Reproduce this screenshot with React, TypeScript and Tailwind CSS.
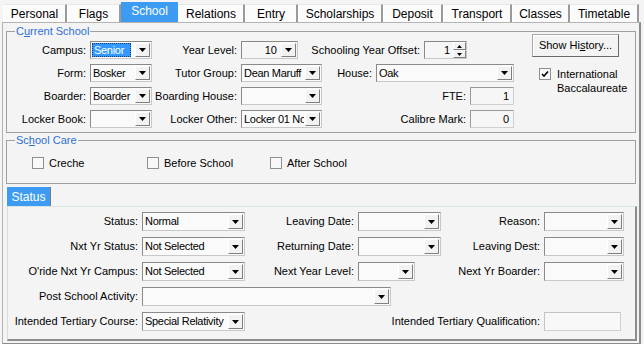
import type { ReactNode } from 'react';

const tabs = [
  { name: 'Personal', w: 'w-[64px]' },
  { name: 'Flags', w: 'w-[54px]' },
  { name: 'School', w: 'w-[57px]', active: true },
  { name: 'Relations', w: 'w-[67px]' },
  { name: 'Entry', w: 'w-[53px]' },
  { name: 'Scholarships', w: 'w-[85px]' },
  { name: 'Deposit', w: 'w-[60px]' },
  { name: 'Transport', w: 'w-[69px]' },
  { name: 'Classes', w: 'w-[58px]' },
  { name: 'Timetable', w: 'w-[69px]' },
];

function Arrow() {
  return (
    <svg width="7" height="4" viewBox="0 0 7 4">
      <polygon points="0,0 7,0 3.5,4" fill="#000" />
    </svg>
  );
}

function Label({ className = '', children }: { className?: string; children: ReactNode }) {
  return <div className={`shrink-0 whitespace-nowrap pr-[4px] text-right ${className}`}>{children}</div>;
}

function Combo({
  className = '',
  value,
  focus = false,
  tall = false,
}: {
  className?: string;
  value?: string;
  focus?: boolean;
  tall?: boolean;
}) {
  return (
    <div
      className={`flex shrink-0 border border-[#8a8a8a] border-r-[#c8c8c8] border-b-[#c8c8c8] bg-[#fafafa] ${
        tall ? 'h-[19px]' : 'h-[18px]'
      } ${className}`}
    >
      <div className="flex min-w-0 flex-1 items-center overflow-hidden whitespace-nowrap pl-[1px] tracking-[-0.3px]">
        {focus ? (
          <span className="border border-dotted border-[#1b3a66] bg-[#3399ff] px-[1px] pr-[6px] leading-[12px] text-white">
            {value}
          </span>
        ) : (
          <span className="pl-[1px]">{value}</span>
        )}
      </div>
      <div className="m-[1px] flex w-[15px] shrink-0 items-center justify-center border border-white border-r-[#7f7f7f] border-b-[#7f7f7f] bg-[#f2f2f2]">
        <Arrow />
      </div>
    </div>
  );
}

function Field({ className = '', value = '', tall = false }: { className?: string; value?: string; tall?: boolean }) {
  return (
    <div
      className={`flex shrink-0 items-center justify-end border border-[#9a9a9a] border-r-[#d0d0d0] border-b-[#d0d0d0] bg-[#f6f6f6] pr-[4px] ${
        tall ? 'h-[19px]' : 'h-[18px]'
      } ${className}`}
    >
      {value}
    </div>
  );
}

function Check({ checked = false }: { checked?: boolean }) {
  return (
    <div className="flex h-[12px] w-[12px] shrink-0 items-center justify-center border border-[#8e8f8f] bg-[#f8f8f8]">
      {checked && (
        <svg width="8" height="8" viewBox="0 0 8 8">
          <path d="M1 4 L3 6 L7 1.5" stroke="#000" strokeWidth="1.6" fill="none" />
        </svg>
      )}
    </div>
  );
}

function Row({ children, tall = false }: { children: ReactNode; tall?: boolean }) {
  return <div className={`flex items-center ${tall ? 'h-[19px]' : 'h-[18px]'}`}>{children}</div>;
}

export default function App() {
  return (
    <div className="h-[344px] w-[644px] overflow-hidden bg-[#f4f4f4] font-['Liberation_Sans',Arial,sans-serif] text-[11px] text-black">
      {/* Tabs */}
      <div className="flex h-[22px] items-end pl-[3px]">
        {tabs.map((t) =>
          t.active ? (
            <div
              key={t.name}
              className={`flex h-[20px] items-center justify-center bg-[#3d9cf2] pb-[3px] text-[12px] text-white ${t.w}`}
            >
              {t.name}
            </div>
          ) : (
            <div
              key={t.name}
              className={`flex h-[18px] items-center justify-center border-t border-l border-r-2 border-t-[#e6e6e6] border-l-white border-r-[#9a9a9a] bg-[#fbfbfb] text-[12px] ${t.w}`}
            >
              {t.name}
            </div>
          )
        )}
      </div>

      {/* Page panel */}
      <div className="ml-[2px] h-[322px] w-[639px] border border-[#b4b4b4] border-r-2 border-r-[#8c8c8c] border-b-[#8c8c8c] px-[3px]">
        {/* Current School */}
        <div className="relative mt-[8px] h-[102px] border border-[#a0a0a0]">
          <span className="absolute top-[-7px] left-[8px] bg-[#f4f4f4] px-[1px] leading-[12px] text-[#2f6fd6]">
            C<span className="underline">u</span>rrent School
          </span>
          <div className="flex pt-[9px]">
            <div className="flex w-[507px] flex-col gap-[5px]">
              <Row>
                <Label className="w-[83px]">Campus:</Label>
                <Combo className="w-[62px]" value="Senior" focus />
                <Label className="w-[89px]">Year Level:</Label>
                <div className="flex h-[18px] w-[57px] shrink-0 border border-[#8a8a8a] border-r-[#c8c8c8] border-b-[#c8c8c8] bg-[#f6f6f6]">
                  <div className="flex flex-1 items-center justify-end pr-[3px]">10</div>
                  <div className="m-[1px] flex w-[15px] items-center justify-center border border-white border-r-[#7f7f7f] border-b-[#7f7f7f] bg-[#f2f2f2]">
                    <Arrow />
                  </div>
                </div>
                <Label className="w-[126px]">Schooling Year Offset:</Label>
                <div className="flex h-[18px] w-[43px] shrink-0 border border-[#8a8a8a] border-r-[#c8c8c8] border-b-[#c8c8c8] bg-[#f6f6f6]">
                  <div className="flex flex-1 items-center justify-end pr-[3px]">1</div>
                  <div className="flex w-[13px] flex-col">
                    <div className="flex flex-1 items-center justify-center border border-white border-r-[#7f7f7f] border-b-[#7f7f7f] bg-[#f2f2f2]">
                      <svg width="5" height="3" viewBox="0 0 5 3">
                        <polygon points="0,3 5,3 2.5,0" fill="#000" />
                      </svg>
                    </div>
                    <div className="flex flex-1 items-center justify-center border border-white border-r-[#7f7f7f] border-b-[#7f7f7f] bg-[#f2f2f2]">
                      <svg width="5" height="3" viewBox="0 0 5 3">
                        <polygon points="0,0 5,0 2.5,3" fill="#000" />
                      </svg>
                    </div>
                  </div>
                </div>
              </Row>
              <Row>
                <Label className="w-[83px]">Form:</Label>
                <Combo className="w-[62px]" value="Bosker" />
                <Label className="w-[89px]">Tutor Group:</Label>
                <Combo className="w-[81px]" value="Dean Maruff" />
                <Label className="w-[54px]">House:</Label>
                <Combo className="w-[138px]" value="Oak" />
              </Row>
              <Row>
                <Label className="w-[83px]">Boarder:</Label>
                <Combo className="w-[62px]" value="Boarder" />
                <Label className="w-[89px]">Boarding House:</Label>
                <Combo className="w-[81px]" />
                <Label className="w-[148px]">FTE:</Label>
                <Field className="w-[44px]" value="1" />
              </Row>
              <Row>
                <Label className="w-[83px]">Locker Book:</Label>
                <Combo className="w-[62px]" />
                <Label className="w-[89px]">Locker Other:</Label>
                <Combo className="w-[81px]" value="Locker 01 Nor" />
                <Label className="w-[148px]">Calibre Mark:</Label>
                <Field className="w-[44px]" value="0" />
              </Row>
            </div>
            <div className="ml-[18px] flex flex-col">
              <button className="mt-[-7px] h-[23px] w-[87px] border border-[#a8a8a8] border-r-[#6a6a6a] border-b-[#6a6a6a] bg-[#f3f3f3] shadow-[inset_1px_1px_0_#ffffff]">
                Show Hi<span className="underline">s</span>tory...
              </button>
              <div className="mt-[10px] ml-[7px] flex items-start gap-[6px]">
                <div className="mt-[1px]">
                  <Check checked />
                </div>
                <div className="leading-[14px]">
                  International
                  <br />
                  Baccalaureate
                </div>
              </div>
            </div>
          </div>
        </div>

        {/* School Care */}
        <div className="relative mt-[7px] h-[44px] border border-[#a0a0a0]">
          <span className="absolute top-[-7px] left-[8px] bg-[#f4f4f4] px-[1px] leading-[12px] text-[#2f6fd6]">
            Sc<span className="underline">h</span>ool Care
          </span>
          <div className="mt-[14px] flex items-center pl-[25px]">
            <div className="flex w-[115px] items-center gap-[5px]">
              <Check />
              Creche
            </div>
            <div className="flex w-[123px] items-center gap-[5px]">
              <Check />
              Before School
            </div>
            <div className="flex items-center gap-[5px]">
              <Check />
              After School
            </div>
          </div>
        </div>

        {/* Status */}
        <div className="mt-[3px] ml-[1px] flex h-[19px] w-[44px] items-center justify-center border-r border-r-[#7a7a7a] bg-[#3d9cf2] text-[12px] text-white">
          Status
        </div>
        <div className="ml-[1px] flex h-[135px] w-[630px] flex-col gap-[6px] border border-t-[#d6e6e2] border-l-[#dcdcdc] border-r-2 border-r-[#8c8c8c] border-b-2 border-b-[#8c8c8c] pt-[5px]">
          <Row tall>
            <Label className="w-[134px]">Status:</Label>
            <Combo tall className="w-[103px]" value="Normal" />
            <Label className="w-[113px]">Leaving Date:</Label>
            <Combo tall className="w-[83px]" />
            <Label className="w-[103px]">Reason:</Label>
            <Combo tall className="w-[80px]" />
          </Row>
          <Row tall>
            <Label className="w-[134px]">Nxt Yr Status:</Label>
            <Combo tall className="w-[103px]" value="Not Selected" />
            <Label className="w-[113px]">Returning Date:</Label>
            <Combo tall className="w-[83px]" />
            <Label className="w-[103px]">Leaving Dest:</Label>
            <Combo tall className="w-[80px]" />
          </Row>
          <Row tall>
            <Label className="w-[134px]">O'ride Nxt Yr Campus:</Label>
            <Combo tall className="w-[103px]" value="Not Selected" />
            <Label className="w-[113px]">Next Year Level:</Label>
            <Combo tall className="w-[57px]" />
            <Label className="w-[129px]">Next Yr Boarder:</Label>
            <Combo tall className="w-[80px]" />
          </Row>
          <Row tall>
            <Label className="w-[134px]">Post School Activity:</Label>
            <Combo tall className="w-[249px]" />
          </Row>
          <Row tall>
            <Label className="w-[134px]">Intended Tertiary Course:</Label>
            <Combo tall className="w-[103px]" value="Special Relativity" />
            <Label className="w-[299px]">Intended Tertiary Qualification:</Label>
            <Field tall className="w-[77px] border-[#c4c4c4] bg-[#f8f8f8]" />
          </Row>
        </div>
      </div>
    </div>
  );
}
